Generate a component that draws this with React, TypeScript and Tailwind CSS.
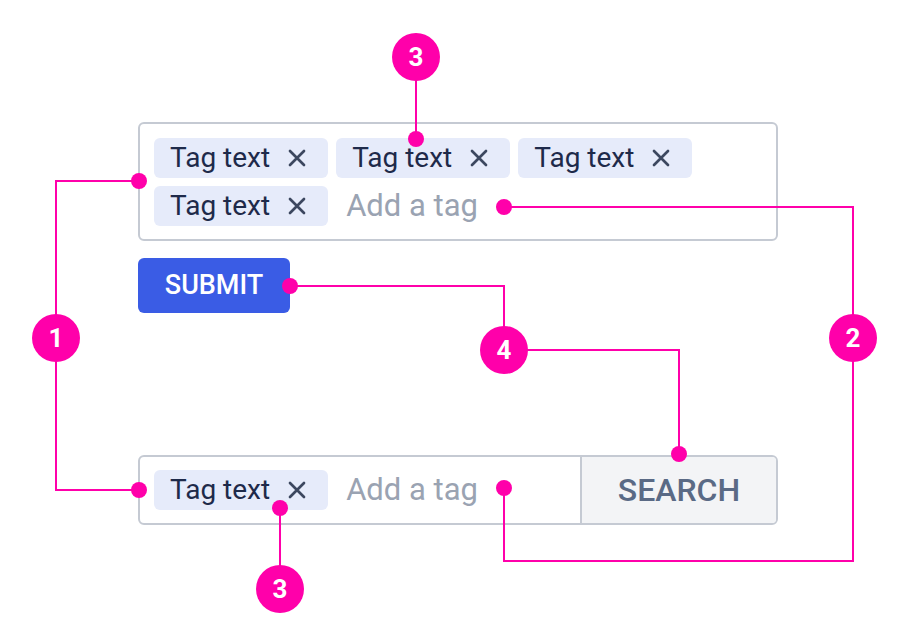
const pink = '#ff00aa'

function Tag() {
  return (
    <div className="flex h-10 shrink-0 items-center rounded-md bg-[#e6ebfa] pl-4 pr-[22px] text-[28px] text-[#1e2a4a]">
      <span>Tag text</span>
      <svg className="ml-[18px]" width={18} height={18} viewBox="0 0 18 18" stroke="#3c475f" strokeWidth={2.7} strokeLinecap="round">
        <path d="M2 2 L16 16 M16 2 L2 16" />
      </svg>
    </div>
  )
}

function Badge({ n, x, y }: { n: number; x: number; y: number }) {
  return (
    <div
      className="absolute flex h-12 w-12 -translate-x-1/2 -translate-y-1/2 items-center justify-center rounded-full bg-[#ff00aa] text-[26px] font-bold text-white"
      style={{ left: x, top: y }}
    >
      {n}
    </div>
  )
}

function Dot({ x, y }: { x: number; y: number }) {
  return (
    <div
      className="absolute h-4 w-4 -translate-x-1/2 -translate-y-1/2 rounded-full bg-[#ff00aa]"
      style={{ left: x, top: y }}
    />
  )
}

const dots = [
  [416, 139],
  [139, 181],
  [504, 207],
  [290, 286],
  [679, 454],
  [139, 490],
  [504, 488],
  [280, 508],
]

export default function App() {
  return (
    <div className="relative h-[644px] w-[910px] overflow-hidden bg-white font-['Roboto',sans-serif]">
      <div className="flex flex-col items-start pl-[138px] pt-[122px]">
        {/* tag input, wrapping */}
        <div className="flex w-[640px] flex-wrap items-center gap-2 rounded-md border-2 border-[#c5cad3] px-[14px] pb-[13px] pt-[14px]">
          <Tag />
          <Tag />
          <Tag />
          <Tag />
          <input
            className="ml-[10px] h-10 min-w-0 flex-1 bg-transparent text-[31px] text-[#1e2a4a] outline-none placeholder:text-[#9aa3b2]"
            placeholder="Add a tag"
          />
        </div>

        <button className="mt-[17px] h-[55px] w-[152px] rounded-md bg-[#3a5ce5] text-[27px] font-medium text-white">
          SUBMIT
        </button>

        {/* tag input with search */}
        <div className="mt-[142px] flex h-[70px] w-[640px] rounded-md border-2 border-[#c5cad3]">
          <div className="flex min-w-0 flex-1 items-center pl-[14px]">
            <Tag />
            <input
              className="ml-[18px] h-10 min-w-0 flex-1 bg-transparent text-[31px] text-[#1e2a4a] outline-none placeholder:text-[#9aa3b2]"
              placeholder="Add a tag"
            />
          </div>
          <button className="w-[196px] shrink-0 rounded-r-[4px] border-l-2 border-[#c5cad3] bg-[#f3f4f6] text-[32px] font-medium text-[#5a6a85]">
            SEARCH
          </button>
        </div>
      </div>

      {/* annotations */}
      <svg className="pointer-events-none absolute inset-0" width={910} height={644} fill="none" stroke={pink} strokeWidth={2}>
        <path d="M416 80 V139" />
        <path d="M139 181 H56 V490 H139" />
        <path d="M504 207 H853 V561 H504 V488" />
        <path d="M290 286 H504 V350 H679 V454" />
        <path d="M280 508 V589" />
      </svg>
      {dots.map(([x, y], i) => (
        <Dot key={i} x={x} y={y} />
      ))}
      <Badge n={3} x={416} y={57} />
      <Badge n={1} x={56} y={338} />
      <Badge n={2} x={853} y={338} />
      <Badge n={4} x={504} y={350} />
      <Badge n={3} x={280} y={589} />
    </div>
  )
}
